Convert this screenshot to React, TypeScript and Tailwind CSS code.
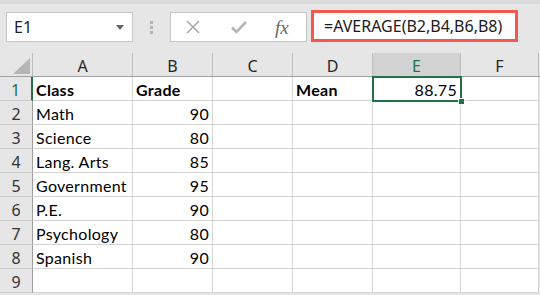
import React from "react";

const cols = [
  { key: "A", w: "w-[100px]" },
  { key: "B", w: "w-[80px]" },
  { key: "C", w: "w-[80px]" },
  { key: "D", w: "w-[80px]" },
  { key: "E", w: "w-[88px]" },
  { key: "F", w: "w-[78px]" },
];

type Cell = { t: string; bold?: boolean; right?: boolean };
const data: Record<number, Record<string, Cell>> = {
  1: { A: { t: "Class", bold: true }, B: { t: "Grade", bold: true }, D: { t: "Mean", bold: true }, E: { t: "88.75", right: true } },
  2: { A: { t: "Math" }, B: { t: "90", right: true } },
  3: { A: { t: "Science" }, B: { t: "80", right: true } },
  4: { A: { t: "Lang. Arts" }, B: { t: "85", right: true } },
  5: { A: { t: "Government" }, B: { t: "95", right: true } },
  6: { A: { t: "P.E." }, B: { t: "90", right: true } },
  7: { A: { t: "Psychology" }, B: { t: "80", right: true } },
  8: { A: { t: "Spanish" }, B: { t: "90", right: true } },
  9: {},
};

const font = { fontFamily: "Lato, 'Open Sans', sans-serif" };

export default function App() {
  return (
    <div className="w-[540px] h-[295px] bg-[#e6e6e6] overflow-hidden flex flex-col text-[#000]" style={font}>
      <div className="h-[4px] bg-[#dadada]" />
      {/* toolbar */}
      <div className="h-[38px] flex items-end">
        <div className="ml-[6px] w-[127px] h-[30px] bg-white border border-[#c6c6c6] flex items-center justify-between pl-[7px] pr-[8px]">
          <span className="text-[16px] text-[#222]" style={{ fontFamily: "'Noto Sans', sans-serif" }}>E1</span>
          <svg width="8" height="5" viewBox="0 0 8 5"><path d="M0 0h8L4 5z" fill="#666" /></svg>
        </div>
        <div className="w-[37px] h-[30px] flex flex-col items-center justify-center gap-[2px]">
          <div className="w-[3px] h-[3px] bg-[#b3b3b3]" />
          <div className="w-[3px] h-[3px] bg-[#b3b3b3]" />
          <div className="w-[3px] h-[3px] bg-[#b3b3b3]" />
        </div>
        <div className="w-[137px] h-[30px] bg-white border border-[#c6c6c6] flex items-center">
          <svg className="ml-[14px]" width="16" height="16" viewBox="0 0 16 16"><path d="M2 2L14 14M14 2L2 14" stroke="#aaa" strokeWidth="1.6" /></svg>
          <svg className="ml-[29px]" width="18" height="16" viewBox="0 0 18 16"><path d="M2 8.5L6.5 13L16 3" stroke="#b5b5b5" strokeWidth="2.6" fill="none" /></svg>
          <span className="ml-[27px] text-[19px] italic text-[#666] leading-none" style={{ fontFamily: "'Liberation Serif', serif" }}>fx</span>
        </div>
        <div className="ml-[4px] w-[207px] h-[32px] bg-white border-[3px] border-[#f15b4f] flex items-center pl-[10px]">
          <span className="text-[16px] text-[#1a1a1a]" style={{ fontFamily: "'Noto Sans', sans-serif" }}>=AVERAGE(B2,B4,B6,B8)</span>
        </div>
      </div>
      <div className="h-[11px]" />
      {/* sheet */}
      <div className="relative flex flex-col">
        {/* header row */}
        <div className="flex h-[24px] border-b border-[#9f9f9f]">
          <div className="w-[33px] border-r border-[#bdbdbd] relative">
            <svg className="absolute right-[2px] bottom-[2px]" width="17" height="16" viewBox="0 0 17 16"><path d="M17 0V16H0z" fill="#b5b5b5" /></svg>
          </div>
          {cols.map((c) => (
            <div
              key={c.key}
              className={`${c.w} border-r border-[#bdbdbd] flex items-center justify-center pt-[2px] text-[16px] ${c.key === "E" ? "bg-[#d2d2d2] text-[#217346]" : "text-[#262626]"}`}
              style={{ fontFamily: "'Noto Sans', sans-serif" }}
            >
              {c.key}
            </div>
          ))}
        </div>
        {[1, 2, 3, 4, 5, 6, 7, 8, 9].map((r) => (
          <div key={r} className="flex h-[24px]">
            <div
              className={`w-[33px] flex items-center justify-center pt-[2px] text-[16px] border-b border-[#cdcdcd] ${r === 1 ? "text-[#217346] border-r-2 border-r-[#217346]" : "text-[#333] border-r border-r-[#9f9f9f]"}`}
              style={{ fontFamily: "'Noto Sans', sans-serif" }}
            >
              {r}
            </div>
            {cols.map((c) => {
              const cell = data[r][c.key];
              return (
                <div
                  key={c.key}
                  className={`${c.w} bg-white border-r border-b border-[#d4d4d4] flex items-center pt-[2px] px-[3px] text-[16px] tracking-[0.3px] ${cell?.right ? "justify-end" : ""} ${cell?.bold ? "font-bold" : ""}`}
                >
                  {cell?.t ?? ""}
                </div>
              );
            })}
          </div>
        ))}
        {/* selection */}
        <div className="absolute left-[372px] top-[23px] w-[90px] h-[26px] border-2 border-[#217346] pointer-events-none">
          <div className="absolute right-[-5px] bottom-[-5px] w-[7px] h-[7px] bg-[#217346] border border-white" />
        </div>
      </div>
    </div>
  );
}
